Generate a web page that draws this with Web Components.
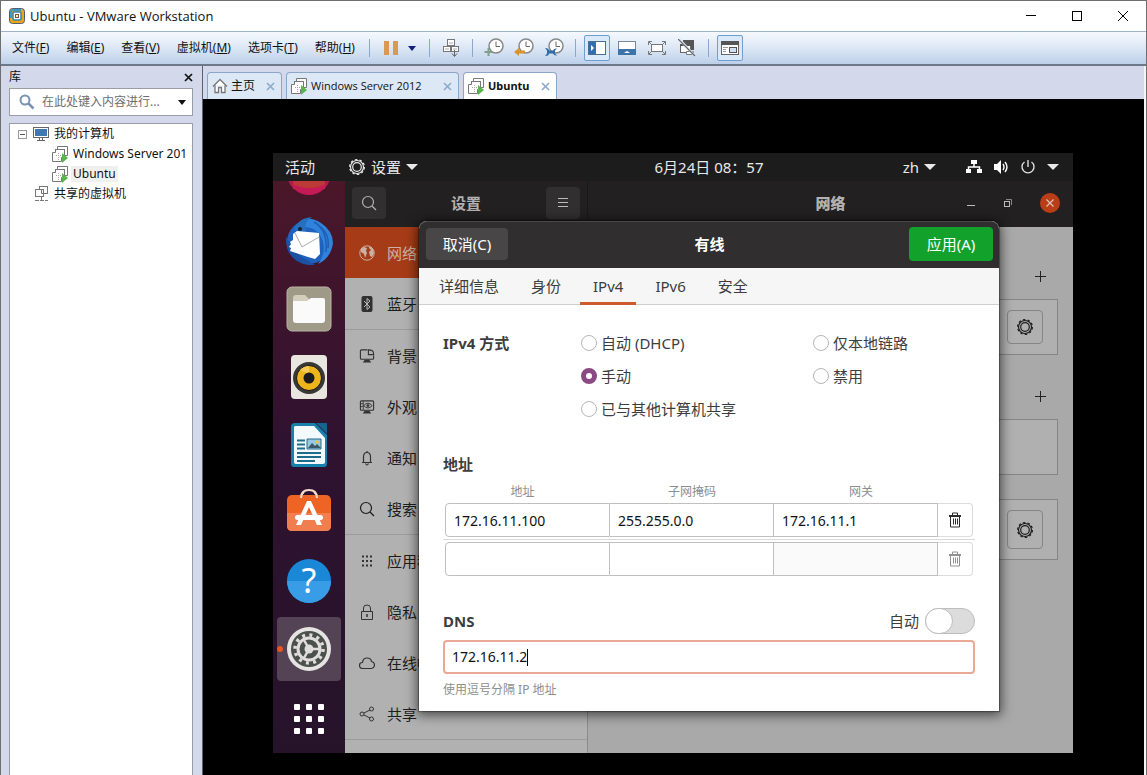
<!DOCTYPE html>
<html lang="zh-CN">
<head>
  <meta charset="utf-8">
  <title>Ubuntu - VMware Workstation</title>
  <style>
    html, body {
      height: 100%;
      margin: 0;
    }

    body {
      font: 12px/16px "Noto Sans", "Noto Sans CJK SC", sans-serif;
      color: #111;
      background: #000;
    }
  </style>
</head>
<body>
  <vm-workstation>
    <title-bar slot="top">Ubuntu - VMware Workstation</title-bar>
    <tool-bar slot="top"></tool-bar>
    <library-panel slot="side"></library-panel>
    <vm-tabs slot="main"></vm-tabs>
    <guest-screen slot="main">
      <guest-bar slot="bar"></guest-bar>
      <guest-dock slot="dock"></guest-dock>
      <settings-window>
        <wired-dialog slot="dialog"></wired-dialog>
      </settings-window>
    </guest-screen>
  </vm-workstation>

  <script>
    // name: [width, height, markup]
    const VM = `<g fill="#fff" stroke="#777"><path d="M5.5 5V.5H15.500V9.500H12.500"/><rect x="3.500" y="3.500" width="9" height="8"/><path d="M3.500 6.500H.5V15.500H9.500V11.500"/></g><path d="M4 9.500h5M6.500 7v7" stroke="#aaa" stroke-dasharray="1 1"/><path d="M10 7l6 5-6 5z" fill="#5ab54b"/>`;
    const CLOCK = `<circle cx="12" cy="8" r="7" fill="#fff" stroke="#888" stroke-width="1.500"/><path d="M12 3.500V8.500H16" stroke="#666" fill="none"/>`;
    const ICONS = {
      logo: [16, 16, `<rect x=".5" y=".5" width="15" height="15" rx="3" fill="#f0a31c" stroke="#4e5d70"/><path d="M2 10V4q0-2 2-2h8" fill="none" stroke="#3a9bc4" stroke-width="2"/><rect x="4" y="4" width="8" height="8" rx="1" fill="#fff" stroke="#3186ad" stroke-width="1.500"/><rect x="6.500" y="6.500" width="3" height="3" fill="#f7f2d8" stroke="#7b5636"/>`],
      min: [12, 12, `<path d="M1 5.500h10" stroke="#000"/>`],
      max: [12, 12, `<rect x="1.500" y="1.500" width="9" height="9" fill="none" stroke="#000"/>`],
      close: [12, 12, `<path d="M1 1l10 10M11 1L1 11" stroke="#000"/>`],
      pause: [16, 16, `<path d="M1 1h5v14H1zM10 1h5v14h-5z" fill="#d99853"/>`],
      caret: [8, 5, `<path d="M0 0h8L4 5z" fill="currentColor"/>`],
      cad: [18, 20, `<g fill="#fff" stroke="#777"><rect x="5.500" y="1.500" width="7" height="6"/><rect x="1.500" y="8.500" width="7" height="5"/><rect x="9.500" y="8.500" width="7" height="5"/></g><path d="M7 5h4M3 11h4M11 11h4" stroke="#aaa"/><path d="M12.500 12v6M10 15.500l2.500 3 2.500-3" stroke="#666" fill="none"/>`],
      snap: [20, 20, CLOCK + `<path d="M4.500 10v8M.5 14h8" stroke="#7fa08a" stroke-width="2"/>`],
      revert: [20, 20, CLOCK + `<path d="M0 14l5-4v2.500h6v3H5V18z" fill="#d8922f"/>`],
      manage: [20, 20, CLOCK + `<path d="M1 10q4 0 4 2.500h4q1-2.500 4-2l-2 2v3l2 2q-3 .5-4-2H5Q5 18 1 18l2-2.500v-3z" fill="#2e6da8"/>`],
      side: [18, 16, `<rect x=".5" y="1.500" width="17" height="13" fill="#fff" stroke="#4a6f96"/><path d="M1 2h7v12H1z" fill="#2f6fae"/><path d="M3 5l3 3-3 3z" fill="#fff"/>`],
      thumb: [18, 16, `<rect x=".5" y="1.500" width="17" height="13" fill="#fff" stroke="#7a8794"/><path d="M0 9h18v6H0z" fill="#3d74a8"/><path d="M6 13l3-2 3 2z" fill="#fff"/>`],
      full: [18, 16, `<rect x="3.500" y="4.500" width="11" height="7" fill="#fff" stroke="#777"/><path d="M.5 5V1.500H4M14 1.500h3.500V5M17.500 11v3.500H14M4 14.500H.5V11M1 2l3 3M17 2l-3 3M17 14l-3-3M1 14l3-3" stroke="#777" fill="none"/>`],
      unity: [18, 18, `<path d="M5 1h11v10h-3V5H5z" fill="#555"/><rect x="2.500" y="5.500" width="10" height="8" fill="#fff" stroke="#666"/><path d="M2 5h11v2H2z" fill="#555"/><path d="M8.500 12.500h7v3h-7z" fill="#fff" stroke="#777"/><path d="M1 0l16 17" stroke="#dbe6f5" stroke-width="2.500"/><path d="M0 0l17 17" stroke="#666" stroke-width="1.200"/>`],
      library: [18, 16, `<rect x=".5" y="1.500" width="17" height="13" fill="#fff" stroke="#666"/><path d="M0 1h18v4H0z" fill="#555"/><path d="M2 7.500h5M2 9.500h3M2 11.500h3" stroke="#999"/><rect x="8.500" y="7.500" width="7" height="5" fill="#cfe0f3" stroke="#555"/>`],
      find: [16, 16, `<circle cx="6" cy="6" r="4.500" fill="none" stroke="#7b93b3" stroke-width="2"/><path d="M9.500 9.500l5 5" stroke="#7b93b3" stroke-width="2.500"/>`],
      x: [9, 9, `<path d="M1 1l7 7M8 1L1 8" stroke="currentColor" stroke-width="1.700"/>`],
      home: [16, 16, `<path d="M1 8.500L8 1.500l7 7M3 7.500V14.500H6.500V9.500H9.500V14.500H13V7.500" fill="#fff" stroke="#777" stroke-width="1.300"/>`],
      vm: [17, 17, VM],
      pc: [16, 16, `<rect x=".5" y="1.500" width="15" height="10" fill="#fff" stroke="#666"/><path d="M2 3h12v7H2z" fill="#3c78b4"/><path d="M6.500 12v3M9.500 12v3M4 14.500h8" stroke="#666"/>`],
      shared: [15, 16, `<g fill="#fff" stroke="#777"><rect x="5.500" y=".5" width="8" height="7"/><rect x="1.500" y="3.500" width="8" height="7"/></g><path d="M7.500 3.500v4h4M7.500 11v3M1 14.500h4M6 14.500h4M11 14.500h3" stroke="#777" fill="none"/>`],
      minus: [9, 9, `<rect x=".5" y=".5" width="8" height="8" fill="#fff" stroke="#999"/><path d="M2 4.500h5" stroke="#555"/>`],
      gear: [18, 18, `<g fill="none" stroke="currentColor"><circle cx="9" cy="9" r="6.500" stroke-width="1.200"/><circle cx="9" cy="9" r="4.300" stroke-width="1.200"/><circle cx="9" cy="9" r="7.400" stroke-width="1.200" stroke-dasharray="2.500 2.149"/></g>`],
      tri: [12, 6, `<path d="M0 0h12L6 6z" fill="currentColor"/>`],
      lan: [16, 16, `<path d="M5 1h6v4H5zM0 10h5v4H0zM11 10h5v4h-5z" fill="#fff"/><path d="M8 5v3M2.500 11V8h11v3" fill="none" stroke="#fff" stroke-width="1.500"/>`],
      sound: [16, 16, `<path d="M1 5h3l4-4v14l-4-4H1z" fill="#fff"/><path d="M10 5q2 3 0 6M12 3q4 5 0 10" fill="none" stroke="#fff" stroke-width="1.400"/>`],
      power: [16, 16, `<path d="M4.500 3a6 6 0 1 0 7 0M8 1v7" fill="none" stroke="#ddd" stroke-width="1.400"/>`],
      search: [16, 16, `<circle cx="7" cy="7" r="5.500" fill="none" stroke="currentColor" stroke-width="1.200"/><path d="M11 11l4 4" stroke="currentColor" stroke-width="1.200"/>`],
      lines: [12, 12, `<path d="M1 1.500h10M1 5.500h10M1 9.500h10" stroke="#bbb"/>`],
      gmin: [10, 10, `<path d="M1 7.500h8" stroke="#bbb"/>`],
      gmax: [10, 10, `<rect x="1.500" y="3.500" width="5" height="5" fill="none" stroke="#bbb"/><path d="M3 1.500h5.500V7" fill="none" stroke="#888"/>`],
      gclose: [20, 20, `<circle cx="10" cy="10" r="10" fill="#b93d16"/><path d="M6.500 6.500l7 7M13.500 6.500l-7 7" stroke="#ddc5bb" stroke-width="1.200"/>`],
      globe: [16, 16, `<circle cx="8" cy="8" r="7.200" fill="none" stroke="#ccb0a3"/><path d="M2 4l3-2 3 1-1 3 1 2-2 5-1-4-3-2zM10 1l4 3 1 4-2 4-2-1-1-4 2-2-2-2z" fill="#ccb0a3"/>`],
      bluetooth: [12, 16, `<rect x=".5" width="11" height="16" rx="2" fill="#303030"/><path d="M3 5l6 6-3 2.500V2.500L9 5l-6 6" fill="none" stroke="#bbb"/>`],
      background: [17, 16, `<path d="M9 1.500H2.500q-1 0-1 1v8q0 1 1 1h12q1 0 1-1V7.500" fill="none" stroke="#333" stroke-width="1.200"/><path d="M10 1.500l0 5h5.500V5.500q0-4-5.500-4z" fill="none" stroke="#333" stroke-width="1.200"/><path d="M6 12h5l2 3H4z" fill="#333"/>`],
      look: [17, 16, `<rect x="1.500" y="1.500" width="14" height="10" rx="1" fill="none" stroke="#333" stroke-width="1.200"/><path d="M4.500 2v9M2 4.500h2M2 7.500h2" stroke="#333"/><path d="M5 6.500q4.500-5 9 0-4.500 5-9 0z" fill="none" stroke="#333"/><circle cx="9.500" cy="6.500" r="1.500" fill="#333"/><path d="M6 12h5l2 3H4z" fill="#333"/>`],
      bell: [16, 16, `<path d="M3 12.500h10M4.500 12V7q0-4.500 3.500-4.500T11.500 7v5M8 1v1M6.500 13.500q1.500 3 3 0" fill="none" stroke="#333" stroke-width="1.200"/>`],
      apps: [16, 16, `<path d="M3 3.500h10M3 8h10M3 12.500h10" stroke="#333" stroke-width="2" stroke-dasharray="2 2"/>`],
      lock: [16, 16, `<path d="M2.500 7.500h11v8h-11zM4.500 7V4q0-3 3.500-3t3.500 3v3" fill="none" stroke="#333"/><path d="M8 10v3" stroke="#333" stroke-width="1.500"/>`],
      cloud: [16, 16, `<path d="M4 13.500q-3.500 0-3.500-3t3-3q.5-4.500 4.500-4.500t4.500 3.500q3 .5 3 3.500t-3 3.500z" fill="none" stroke="#333" stroke-width="1.200"/>`],
      share: [16, 16, `<g fill="none" stroke="#333"><circle cx="3" cy="8" r="2"/><circle cx="12.500" cy="3" r="2"/><circle cx="12.500" cy="13" r="2"/><path d="M5 7l6-3M5 9l6 3"/></g>`],
      plus: [12, 12, `<path d="M5.500 0v11M0 5.500h11" stroke="#222"/>`],
      trash: [14, 16, `<path d="M1 3h12v2H1z" fill="currentColor"/><path d="M4.500 3V1h5v2M2.500 5v10h9V5M5.500 6.500v6M7.500 6.500v6M9.500 6.500v6" fill="none" stroke="currentColor"/>`],
      firefox: [48, 48, `<circle cx="24" cy="24" r="22" fill="#b3184e"/><path d="M8 30h32v10H8z" fill="#bb3a35"/><path d="M5 34q19 10 38 0-7 12-19 12T5 34" fill="#c41a55"/>`],
      mail: [48, 48, `<circle cx="24" cy="25" r="22" fill="#1f62bd"/><path d="M10 10Q20-4 36 6q12 8 12 20-2 15-15 21 8-10 5-22-4-15-20-15z" fill="#2f83dc"/><path d="M1 20q-1 16 11 24 8 5 18 4L15 39z" fill="#1b51a4"/><path d="M8 17l4-3 22 2 1 21-5 5-7-2L5 34l1-3-2-1 2-3-1-2 3-2z" fill="#fff"/><path d="M10 16l7 14 17-10" fill="none" stroke="#aaa"/><path d="M9 13q4-12 18-13-9 5-6 14z" fill="#2670bd"/><circle cx="15" cy="12" r="2" fill="#123"/><path d="M33 8q12 8 10 23M29 5q14 8 12 30" fill="none" stroke="#1f5fb5" stroke-width="1.500"/>`],
      files: [48, 48, `<rect x="2" y="2" width="44" height="44" rx="5" fill="#9f9a87" stroke="#b8b3a1"/><path d="M8 13q0-3 3-3h9l4 4h5v5H8z" fill="#d2cdbd"/><path d="M8 16h14l4-3h12q2 0 2 2v20q0 3-3 3H11q-3 0-3-3z" fill="#fafafa"/>`],
      music: [48, 48, `<rect x="6" y="2" width="36" height="44" rx="4" fill="#e9e6df"/><circle cx="24" cy="25" r="16" fill="#383838"/><circle cx="24" cy="25" r="12.500" fill="#eeb41c" stroke="#161616"/><path d="M15 17q4-4 9-4v8z" fill="#f8cb55"/><circle cx="24" cy="25" r="5.500" fill="#1b1b1b"/>`],
      writer: [48, 48, `<path d="M10 2h20l12 12v29q0 3-3 3H9q-3 0-3-3V6q0-4 4-4z" fill="#1681ad"/><path d="M10 5h19l11 12v24q0 2-2 2H11q-2 0-2-2V6z" fill="#f4fafb"/><path d="M31 2h11v11z" fill="#12658c"/><path d="M12 19.500h8M12 23.500h8M12 27.500h8M12 32h24M12 36h24M12 40h18" stroke="#206c8e" stroke-width="2"/><path d="M22 18h14v10H22z" fill="#96c8df" stroke="#256a8c"/><path d="M23 27l4-5 3 3 2-2 4 4z" fill="#3a5864"/><circle cx="32" cy="21" r="1.500" fill="#f5c330"/>`],
      software: [48, 48, `<path d="M16 9q0-8 8-8t8 8" fill="none" stroke="#f5dbc9" stroke-width="2"/><rect x="2" y="6" width="44" height="36" rx="5" fill="#ee6424"/><path d="M2 24h44v13q0 5-5 5H7q-5 0-5-5z" fill="#f17e4e"/><path d="M16 9q0-4 3-6M32 9q0-4-3-6" fill="none" stroke="#f5dbc9" stroke-width="2"/><path d="M22 12h4l11 24h-5l-8-18-8 18h-5z" fill="#fff"/><rect x="10" y="26" width="28" height="5" rx="2.500" fill="#fff"/>`],
      help: [48, 48, `<circle cx="24" cy="24" r="22" fill="#1b87d7"/><path d="M2 24h44a22 22 0 0 1-44 0z" fill="#389de6"/><text x="24" y="36" font-size="34" font-family="Noto Sans" text-anchor="middle" fill="#fff">?</text>`],
      settings: [48, 48, `<circle cx="24" cy="24" r="22" fill="#e6e4e2"/><circle cx="24" cy="24" r="18" fill="#4c504d"/><g fill="none" stroke="#dfdddb"><circle cx="24" cy="24" r="11" stroke-width="3"/><circle cx="24" cy="24" r="14" stroke-width="3.500" stroke-dasharray="3 4.330"/><path d="M24 24h10M24 24l-5-9M24 24l-5 9" stroke-width="2.500"/></g><circle cx="24" cy="24" r="4.500" fill="#dfdddb"/>`],
      grid: [48, 48, `<g fill="#fff">${[9, 21, 33].map(y => [9, 21, 33].map(x => `<rect x="${x}" y="${y}" width="6" height="6" rx="1"/>`).join('')).join('')}</g>`]
    };

    const RESET = `
      :host, * { box-sizing: border-box; }
      button, input { font: inherit; color: inherit; margin: 0; }
      button { border: 0; padding: 0; background: none; display: inline-flex; align-items: center; justify-content: center; }
      ul { list-style: none; margin: 0; padding: 0; }
    `;

    // Small base: every element only supplies its markup
    class BaseElement extends HTMLElement {
      constructor() {
        super();
        this.attachShadow({ mode: 'open' });
      }

      connectedCallback() {
        this.shadowRoot.innerHTML = `<style>${RESET}</style>` + this.template();
      }
    }

    class SvgIcon extends BaseElement {
      template() {
        const [w, h, body] = ICONS[this.getAttribute('name')];
        return `
          <style>
            :host { display: inline-flex; flex: none; }
            svg { display: block; }
          </style>
          <svg width="${w}" height="${h}" viewBox="0 0 ${w} ${h}" aria-hidden="true">${body}</svg>
        `;
      }
    }

    class VmWorkstation extends BaseElement {
      template() {
        return `
          <style>
            :host {
              display: flex;
              flex-direction: column;
              min-height: 100%;
              background: #d3d9eb;
              border: 1px solid #6e6e6e;
              border-bottom: 0;
            }
            .body { flex: 1; display: grid; grid-template-columns: 201px minmax(0, 1fr); }
            .main {
              display: flex;
              flex-direction: column;
              border-left: 1px solid #59616f;
              border-right: 2px solid #f4f4f6;
            }
          </style>
          <slot name="top"></slot>
          <div class="body">
            <slot name="side"></slot>
            <div class="main"><slot name="main"></slot></div>
          </div>
        `;
      }
    }

    class TitleBar extends BaseElement {
      template() {
        return `
          <style>
            :host { display: flex; align-items: center; height: 30px; padding-left: 8px; background: #fff; }
            .title { flex: 1; margin-left: 5px; font-family: "Open Sans", sans-serif; font-size: 13px; }
            button { width: 46px; height: 30px; }
          </style>
          <svg-icon name="logo"></svg-icon>
          <span class="title"><slot></slot></span>
          <button aria-label="最小化"><svg-icon name="min"></svg-icon></button>
          <button aria-label="最大化"><svg-icon name="max"></svg-icon></button>
          <button aria-label="关闭"><svg-icon name="close"></svg-icon></button>
        `;
      }
    }

    class ToolBar extends BaseElement {
      template() {
        const menus = [['文件', 'F'], ['编辑', 'E'], ['查看', 'V'], ['虚拟机', 'M'], ['选项卡', 'T'], ['帮助', 'H']];
        const tool = (name, label, on = '') => `<button class="tool ${on}" aria-label="${label}"><svg-icon name="${name}"></svg-icon></button>`;
        return `
          <style>
            :host {
              display: flex;
              align-items: center;
              gap: 4px;
              height: 35px;
              padding-left: 11px;
              background: linear-gradient(#f5f9fe, #dfe9f6 45%, #bdd0ea);
              border-top: 1px solid #9fb2c9;
              border-bottom: 2px solid #6d7889;
            }
            .menus { display: flex; gap: 17px; margin-right: 6px; }
            .tool { width: 26px; height: 26px; }
            .on { border: 1px solid #6f9fd0; border-radius: 2px; background: #d9e9fa; }
            .split { display: flex; }
            .more { width: 17px; color: #10207c; }
            hr { width: 1px; height: 18px; margin: 0 4px; border: 0; background: #8ba7cb; }
          </style>
          <div class="menus">${menus.map(([t, k]) => `<button>${t}(<u>${k}</u>)</button>`).join('')}</div>
          <hr>
          <span class="split">${tool('pause', '挂起')}<button class="more" aria-label="电源"><svg-icon name="caret"></svg-icon></button></span>
          <hr>
          ${tool('cad', '发送 Ctrl+Alt+Del')}
          <hr>
          ${tool('snap', '拍摄快照')}${tool('revert', '恢复快照')}${tool('manage', '管理快照')}
          <hr>
          ${tool('side', '显示库', 'on')}${tool('thumb', '缩略图栏')}${tool('full', '全屏')}${tool('unity', 'Unity')}
          <hr>
          ${tool('library', '控制台视图', 'on')}
        `;
      }
    }

    class LibraryPanel extends BaseElement {
      template() {
        return `
          <style>
            :host { display: flex; flex-direction: column; min-width: 0; padding: 0 9px 0 8px; }
            header { display: flex; justify-content: space-between; align-items: center; height: 22px; }
            .search {
              display: flex;
              align-items: center;
              height: 28px;
              padding: 0 6px 0 9px;
              background: #fff;
              border: 1px solid #9a9da6;
            }
            input { flex: 1; min-width: 0; margin-left: 7px; padding: 0; border: 0; outline: 0; }
            input::placeholder { color: #6d6d6d; opacity: 1; }
            .tree { flex: 1; margin-top: 7px; background: #fff; border: 1px solid #9a9da6; border-bottom: 0; }
            .row { display: flex; align-items: center; gap: 5px; height: 20px; padding-left: 24px; white-space: nowrap; }
            .root { padding-left: 8px; gap: 6px; }
            .root span { margin-left: -1px; }
            .child { padding-left: 42px; gap: 2px; }
            .child span { padding: 0 2px; }
            .on span { background: #f0f0f0; }
          </style>
          <header>库<button aria-label="关闭库"><svg-icon name="x"></svg-icon></button></header>
          <div class="search">
            <svg-icon name="find"></svg-icon>
            <input type="text" placeholder="在此处键入内容进行..." aria-label="搜索">
            <button aria-label="筛选"><svg-icon name="caret"></svg-icon></button>
          </div>
          <ul class="tree">
            <li>
              <div class="row root"><svg-icon name="minus"></svg-icon><svg-icon name="pc"></svg-icon><span>我的计算机</span></div>
              <ul>
                <li class="row child"><svg-icon name="vm"></svg-icon><span>Windows Server 201</span></li>
                <li class="row child on"><svg-icon name="vm"></svg-icon><span>Ubuntu</span></li>
              </ul>
            </li>
            <li class="row"><svg-icon name="shared"></svg-icon><span>共享的虚拟机</span></li>
          </ul>
        `;
      }
    }

    class VmTabs extends BaseElement {
      template() {
        return `
          <style>
            :host { display: flex; align-items: flex-end; gap: 4px; height: 33px; padding-left: 4px; }
            .tab {
              display: flex;
              align-items: center;
              gap: 3px;
              height: 27px;
              padding: 0 6px 0 4px;
              background: #dde8f6;
              border: 1px solid #8aa6c8;
              border-bottom: 0;
              border-radius: 4px 4px 0 0;
            }
            .small { font-size: 11px; }
            .tab span { flex: 1; white-space: nowrap; }
            .tab .close { margin-left: 8px; color: #8eabc9; }
            .wide { width: 173px; font-family: "Open Sans", sans-serif; }
            .on { background: #fff; font-weight: bold; }
          </style>
          <div class="tab"><svg-icon name="home"></svg-icon><span>主页</span><button class="close" aria-label="关闭"><svg-icon name="x"></svg-icon></button></div>
          <div class="tab small wide"><svg-icon name="vm"></svg-icon><span>Windows Server 2012</span><button class="close" aria-label="关闭"><svg-icon name="x"></svg-icon></button></div>
          <div class="tab small on"><svg-icon name="vm"></svg-icon><span>Ubuntu</span><button class="close" aria-label="关闭"><svg-icon name="x"></svg-icon></button></div>
        `;
      }
    }

    class GuestScreen extends BaseElement {
      template() {
        return `
          <style>
            :host { display: block; flex: 1; padding: 54px 71px 22px 70px; background: #000; font-size: 15px; line-height: 20px; }
            .row { display: grid; grid-template-columns: 72px minmax(0, 1fr); }
          </style>
          <slot name="bar"></slot>
          <div class="row"><slot name="dock"></slot><slot></slot></div>
        `;
      }
    }

    class GuestBar extends BaseElement {
      template() {
        return `
          <style>
            :host {
              display: grid;
              grid-template-columns: 72px 1fr auto 1fr;
              align-items: center;
              height: 28px;
              background: #1c1c1c;
              color: #e8e8e8;
            }
            .activities { padding-left: 12px; justify-content: flex-start; }
            .app { display: flex; align-items: center; gap: 5px; padding-left: 3px; }
            .status { display: flex; align-items: center; justify-content: flex-end; gap: 11px; padding-right: 14px; }
            .lang { gap: 5px; margin-right: 19px; }
          </style>
          <button class="activities">活动</button>
          <div class="app"><svg-icon name="gear"></svg-icon>设置<svg-icon name="tri"></svg-icon></div>
          <time>6月24日 08：57</time>
          <div class="status">
            <button class="lang">zh<svg-icon name="tri"></svg-icon></button>
            <svg-icon name="lan"></svg-icon>
            <svg-icon name="sound"></svg-icon>
            <svg-icon name="power"></svg-icon>
            <svg-icon name="tri"></svg-icon>
          </div>
        `;
      }
    }

    class GuestDock extends BaseElement {
      template() {
        const apps = ['firefox', 'mail', 'files', 'music', 'writer', 'software', 'help', 'settings', 'grid'];
        return `
          <style>
            :host { display: block; overflow: hidden; background: linear-gradient(#4b1729, #2f1230 45%, #26132a); }
            /* The dock is scrolled, the first launcher is half out of view */
            ul { display: grid; gap: 4px; padding: 0 4px; margin-top: -40px; }
            li { display: flex; align-items: center; }
            button { width: 64px; height: 64px; }
            .settings button { justify-content: flex-start; gap: 2px; border-radius: 4px; background: #544255; }
            .settings button::before { content: ""; width: 6px; height: 6px; border-radius: 3px; background: #e95420; }
            .grid { height: 68px; }
          </style>
          <ul>${apps.map(a => `<li class="${a}"><button aria-label="${a}"><svg-icon name="${a}"></svg-icon></button></li>`).join('')}</ul>
        `;
      }
    }

    class SettingsWindow extends BaseElement {
      template() {
        const groups = [
          [['globe', '网络'], ['bluetooth', '蓝牙']],
          [['background', '背景'], ['look', '外观'], ['bell', '通知'], ['search', '搜索']],
          [['apps', '应用程序'], ['lock', '隐私'], ['cloud', '在线帐户'], ['share', '共享']]
        ];
        return `
          <style>
            :host {
              display: grid;
              grid-template: 46px 1fr / 243px minmax(0, 1fr);
              position: relative;
              background: #a9a9a9;
              color: #1c1c1c;
            }
            .head { display: flex; align-items: center; justify-content: space-between; padding: 0 7px 2px; background: #222021; color: #b2b1b0; font-weight: bold; border-right: 1px solid #1a1919; }
            .head button { width: 34px; height: 32px; border-radius: 4px; background: #312f30; }
            .page-head { display: grid; grid-template-columns: 1fr auto 1fr; padding: 0 0 2px; border: 0; }
            .controls { display: flex; align-items: center; justify-content: flex-end; gap: 27px; grid-column: 3; padding-right: 13px; }
            .page-head b { grid-column: 2; }
            .page-head .controls button { width: auto; height: auto; background: none; }
            nav { background: #b1b1b1; border-right: 1px solid #8b8b8b; }
            ul { border-bottom: 1px solid #9b9b9b; }
            li { display: flex; align-items: center; height: 51px; padding: 0 14px; }
            li svg-icon { width: 16px; justify-content: center; }
            li span { margin-left: 12px; }
            ul:first-child li:first-child { background: #a63c17; color: #ccb0a3; }
            .page { padding: 27px 15px 0; }
            .add { display: flex; justify-content: flex-end; align-items: center; height: 45px; padding-right: 4px; }
            .add button { width: 26px; height: 26px; }
            .card { display: flex; justify-content: flex-end; padding: 10px 14px; height: 56px; border: 1px solid #858585; background: #b0b0b0; }
            .card button { width: 36px; border: 1px solid #858585; border-radius: 4px; }
            .card + .add { margin-top: 19px; }
            .card + .card { margin-top: 24px; height: 61px; }
          </style>
          <div class="head">
            <button aria-label="搜索"><svg-icon name="search"></svg-icon></button>
            设置
            <button aria-label="菜单"><svg-icon name="lines"></svg-icon></button>
          </div>
          <div class="head page-head">
            <b>网络</b>
            <div class="controls">
              <button aria-label="最小化"><svg-icon name="gmin"></svg-icon></button>
              <button aria-label="还原"><svg-icon name="gmax"></svg-icon></button>
              <button aria-label="关闭"><svg-icon name="gclose"></svg-icon></button>
            </div>
          </div>
          <nav>${groups.map(g => `<ul>${g.map(([i, t]) => `<li><svg-icon name="${i}"></svg-icon><span>${t}</span></li>`).join('')}</ul>`).join('')}</nav>
          <div class="page">
            <div class="add"><button aria-label="添加"><svg-icon name="plus"></svg-icon></button></div>
            <div class="card"><button aria-label="选项"><svg-icon name="gear"></svg-icon></button></div>
            <div class="add"><button aria-label="添加"><svg-icon name="plus"></svg-icon></button></div>
            <div class="card"></div>
            <div class="card"><button aria-label="选项"><svg-icon name="gear"></svg-icon></button></div>
          </div>
          <slot name="dialog"></slot>
        `;
      }
    }

    class WiredDialog extends BaseElement {
      template() {
        const radio = (text, on = '') => `<label><input type="radio" name="method" ${on}>${text}</label>`;
        return `
          <style>
            :host { position: absolute; inset: 40px 0 auto; display: flex; justify-content: center; color: #3d3d3d; }
            .dialog { width: 580px; max-width: 100%; border-radius: 8px 8px 0 0; background: #fff; box-shadow: 0 2px 12px 2px #0009, 0 0 1px 1px #0005; }
            header {
              display: grid;
              grid-template-columns: 1fr auto 1fr;
              align-items: center;
              height: 47px;
              padding: 0 6px 2px 7px;
              border-radius: 8px 8px 0 0;
              border-top: 1px solid #4a4848;
              background: #302e2f;
              color: #fff;
            }
            header button { height: 32px; border-radius: 4px; background: #484646; justify-self: start; width: 82px; }
            header .apply { height: 34px; width: 84px; background: #12a12b; justify-self: end; }
            nav { display: flex; gap: 6px; height: 37px; padding-left: 7px; background: #f6f6f6; border-bottom: 1px solid #cfcfcf; }
            nav button { padding: 0 13px; border-bottom: 3px solid transparent; border-top: 2px solid transparent; margin-bottom: -1px; }
            nav .on { border-bottom-color: #cf5a30; }
            form { padding: 21px 24px 13px; }
            h2 { font-size: inherit; margin: 0; }
            .method { display: grid; grid-template-columns: 138px 232px 1fr; grid-auto-rows: 33px; align-items: center; }
            .method h2 { grid-column: 1; }
            .method .a { grid-column: 2; }
            label { display: flex; align-items: center; gap: 4px; }
            input[type=radio] { appearance: none; width: 16px; height: 16px; border: 1px solid #b5b5b5; border-radius: 8px; background: #fff; }
            input[type=radio]:checked { border: 5px solid #8b4a83; }
            .title { margin-top: 29px; }
            table { width: 100%; margin-top: 10px; border-spacing: 0; table-layout: fixed; }
            th { padding: 0 0 3px; font: 12px/16px "Noto Sans", "Noto Sans CJK SC", sans-serif; color: #8e8e8e; }
            th:first-child { width: 167px; padding-right: 8px; }
            th:nth-child(3) { padding-left: 10px; }
            th:last-child { width: 37px; }
            td { padding: 0; }
            td:first-child { padding-left: 2px; }
            td:last-child { padding-right: 2px; }
            .first td { padding-bottom: 2px; border-bottom: 1px solid #dadada; }
            .second td { padding-top: 2px; }
            td input, td button {
              display: flex;
              width: 100%;
              height: 34px;
              padding: 0 8px;
              border: 1px solid #bfbfbf;
              border-left-width: 0;
              background: #fff;
              outline: 0;
              color: #111;
              font-size: 14px;
            }
            td:first-child input { border-left-width: 1px; border-radius: 4px 0 0 4px; }
            td button { border-color: #dcdcdc; border-radius: 0 4px 4px 0; color: #2d2d2d; }
            td input:disabled { background: #fafafa; }
            td button:disabled { color: #929292; }
            .dns { display: flex; justify-content: space-between; align-items: center; margin-top: 32px; height: 26px; }
            .dns label { gap: 6px; }
            .switch { appearance: none; display: flex; width: 50px; height: 26px; border: 1px solid #bdbdbd; border-radius: 13px; background: #dcdcdc; }
            .switch::before { content: ""; width: 26px; margin: -1px; border: 1px solid #bdbdbd; border-radius: 13px; background: #fff; }
            .field { display: flex; align-items: center; height: 34px; margin-top: 6px; padding: 0 7px; border: 2px solid #e9a995; border-radius: 4px; }
            .field input { field-sizing: content; padding: 0; border: 0; outline: 0; color: #111; font-size: 14px; }
            .caret { width: 1px; height: 17px; background: #000; }
            p { margin: 8px 0 0; font-size: 12px; line-height: 16px; color: #8e8e8e; }
          </style>
          <div class="dialog" role="dialog" aria-label="有线">
            <header><button>取消(C)</button><b>有线</b><button class="apply">应用(A)</button></header>
            <nav><button>详细信息</button><button>身份</button><button class="on">IPv4</button><button>IPv6</button><button>安全</button></nav>
            <form>
              <div class="method">
                <h2>IPv4 方式</h2>${radio('自动 (DHCP)')}${radio('仅本地链路')}
                <div class="a">${radio('手动', 'checked')}</div>${radio('禁用')}
                <div class="a">${radio('已与其他计算机共享')}</div>
              </div>
              <h2 class="title">地址</h2>
              <table>
                <thead><tr><th>地址</th><th>子网掩码</th><th>网关</th><th></th></tr></thead>
                <tbody>
                  <tr class="first">
                    <td><input type="text" aria-label="地址" value="172.16.11.100"></td>
                    <td><input type="text" aria-label="子网掩码" value="255.255.0.0"></td>
                    <td><input type="text" aria-label="网关" value="172.16.11.1"></td>
                    <td><button type="button" aria-label="删除"><svg-icon name="trash"></svg-icon></button></td>
                  </tr>
                  <tr class="second">
                    <td><input type="text" aria-label="地址"></td>
                    <td><input type="text" aria-label="子网掩码"></td>
                    <td><input type="text" aria-label="网关" disabled></td>
                    <td><button type="button" aria-label="删除" disabled><svg-icon name="trash"></svg-icon></button></td>
                  </tr>
                </tbody>
              </table>
              <div class="dns"><h2>DNS</h2><label>自动<input class="switch" type="checkbox"></label></div>
              <div class="field"><input type="text" aria-label="DNS" value="172.16.11.2"><span class="caret"></span></div>
              <p>使用逗号分隔 IP 地址</p>
            </form>
          </div>
        `;
      }
    }

    customElements.define('svg-icon', SvgIcon);
    customElements.define('vm-workstation', VmWorkstation);
    customElements.define('title-bar', TitleBar);
    customElements.define('tool-bar', ToolBar);
    customElements.define('library-panel', LibraryPanel);
    customElements.define('vm-tabs', VmTabs);
    customElements.define('guest-screen', GuestScreen);
    customElements.define('guest-bar', GuestBar);
    customElements.define('guest-dock', GuestDock);
    customElements.define('settings-window', SettingsWindow);
    customElements.define('wired-dialog', WiredDialog);
  </script>
</body>
</html>
